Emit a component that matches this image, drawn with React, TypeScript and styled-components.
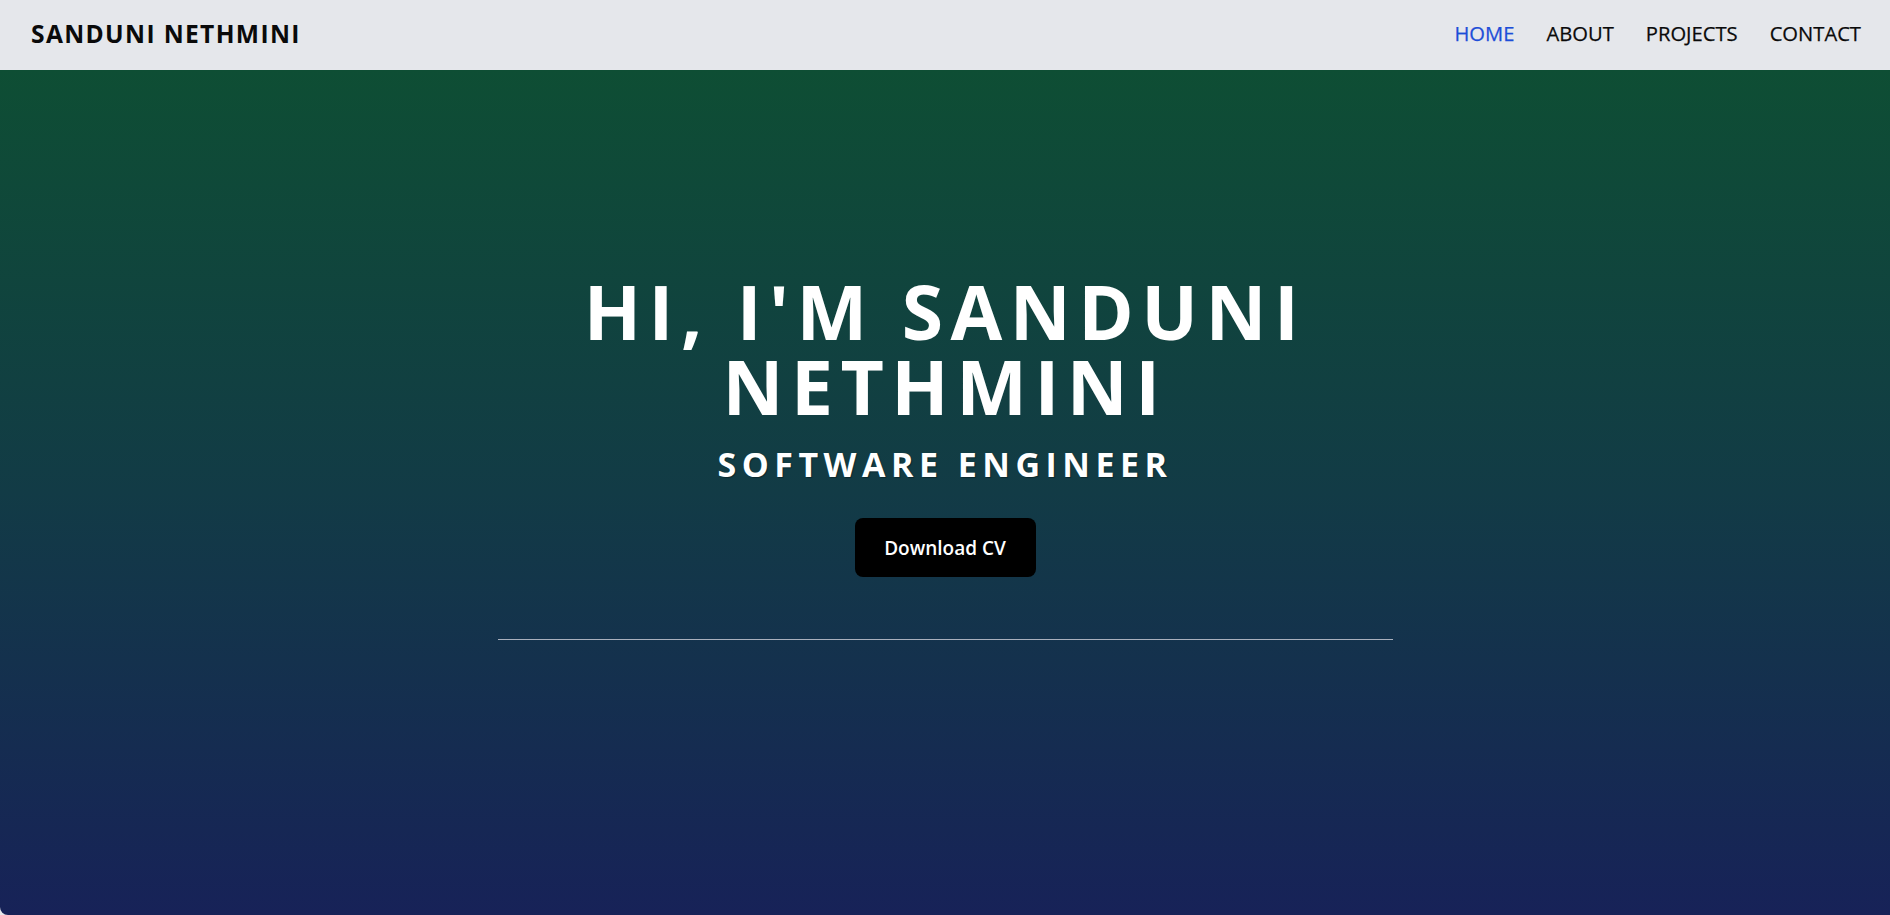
import React from "react";
import styled, { createGlobalStyle } from "styled-components";

const GlobalStyle = createGlobalStyle`
  html, body { margin: 0; padding: 0; }
  body {
    font-family: "Open Sans", "Noto Sans", "Liberation Sans", sans-serif;
    background: #e5e7eb;
  }
  * { box-sizing: border-box; }
`;

const Page = styled.div`
  display: flex;
  flex-direction: column;
  min-height: 915px;
`;

const NavBar = styled.header`
  height: 70px;
  flex: 0 0 70px;
  background: #e5e7eb;
  display: flex;
  align-items: center;
  justify-content: space-between;
  padding: 0 29px 4px 31px;
`;

const Logo = styled.div`
  font-size: 24.6px;
  font-weight: 700;
  letter-spacing: 1.35px;
  color: #0a0a0a;
`;

const NavLinks = styled.nav`
  display: flex;
  align-items: center;
  gap: 32px;
`;

const NavLink = styled.a<{ $active?: boolean }>`
  font-size: 20.2px;
  font-weight: 500;
  color: ${(p) => (p.$active ? "#1d4ed8" : "#0a0a0a")};
  text-decoration: none;
  cursor: pointer;
  -webkit-text-stroke: 0.25px currentColor;
`;

const Hero = styled.section`
  flex: 1;
  min-height: 845px;
  background: linear-gradient(to bottom, #0e4e34 0%, #123b46 50%, #172258 100%);
  border-bottom-left-radius: 8px;
  display: flex;
  flex-direction: column;
  align-items: center;
  padding-top: 204px;
`;

const Title = styled.h1`
  margin: 0;
  font-size: 75px;
  line-height: 75px;
  font-weight: 700;
  letter-spacing: 7.5px;
  color: #ffffff;
  text-align: center;
  max-width: 780px;
`;

const Subtitle = styled.h2`
  margin: 21px 0 0;
  font-size: 34px;
  line-height: 39px;
  font-weight: 700;
  letter-spacing: 5.5px;
  color: #ffffff;
  text-align: center;
  text-shadow: 1px 1px 1px rgba(0, 0, 0, 0.35);
`;

const DownloadButton = styled.button`
  margin-top: 34px;
  width: 181px;
  height: 59px;
  background: #000000;
  color: #ffffff;
  border: none;
  border-radius: 8px;
  font-family: inherit;
  font-size: 19px;
  font-weight: 600;
  cursor: pointer;
`;

const Divider = styled.hr`
  margin: 62px 0 0;
  width: 895px;
  border: none;
  height: 1px;
  background: #aab0bd;
`;

export default function App() {
  return (
    <>
      <GlobalStyle />
      <Page>
        <NavBar>
          <Logo>SANDUNI NETHMINI</Logo>
          <NavLinks>
            <NavLink $active>HOME</NavLink>
            <NavLink>ABOUT</NavLink>
            <NavLink>PROJECTS</NavLink>
            <NavLink>CONTACT</NavLink>
          </NavLinks>
        </NavBar>
        <Hero>
          <Title>HI, I'M SANDUNI NETHMINI</Title>
          <Subtitle>SOFTWARE ENGINEER</Subtitle>
          <DownloadButton>Download CV</DownloadButton>
          <Divider />
        </Hero>
      </Page>
    </>
  );
}
